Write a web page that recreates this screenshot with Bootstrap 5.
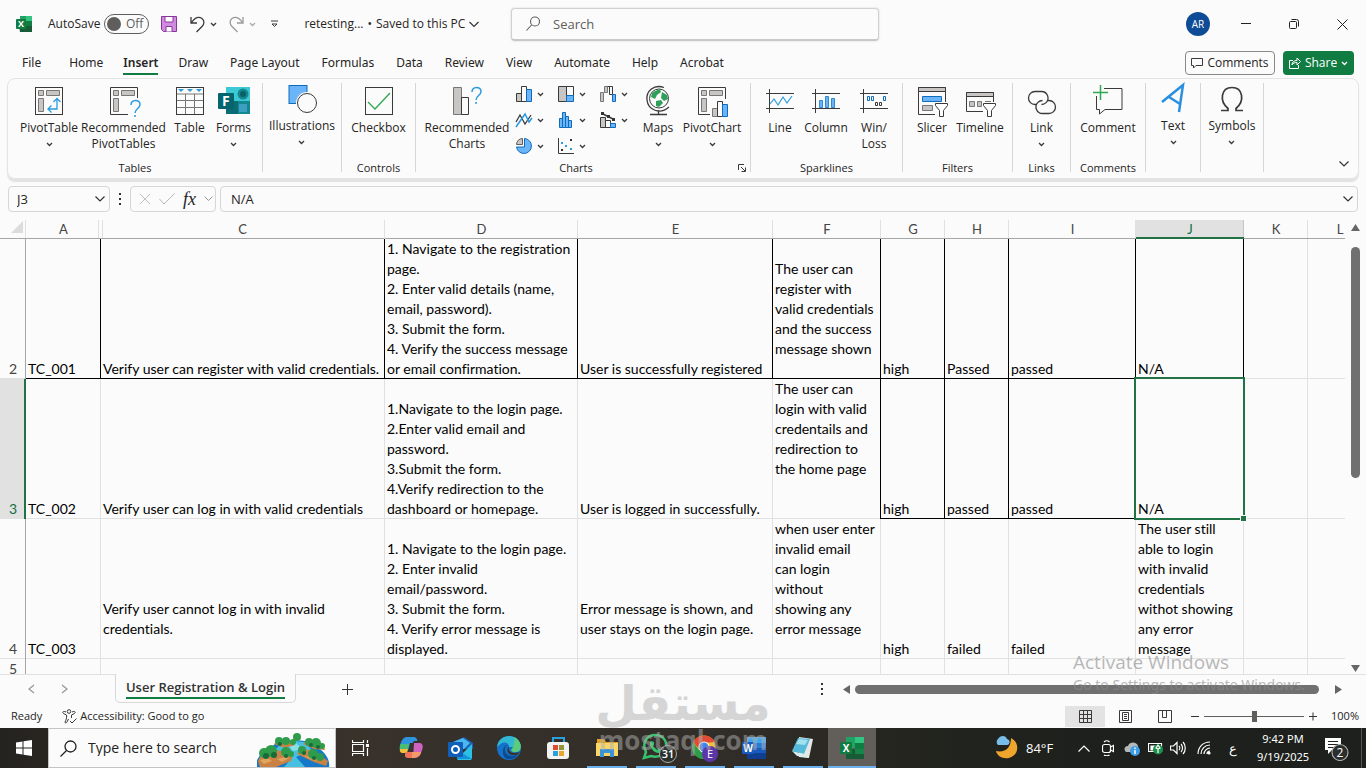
<!DOCTYPE html>
<html lang="en">
<head>
<meta charset="utf-8">
<meta name="viewport" content="width=device-width, initial-scale=1">
<title>retesting - Excel</title>
<link href="https://cdn.jsdelivr.net/npm/bootstrap@5.3.0/dist/css/bootstrap.min.css" rel="stylesheet">
<style>
  :root { --ink:#252423; --paper:#fbfbfb; --excel:#107c41; --line:#e1e1e1; }
  body { font-family:"Open Sans","Noto Sans",sans-serif; font-size:12px; line-height:16px; color:var(--ink); background:var(--paper); overflow-x:hidden; }
  button, input { font:inherit; color:inherit; }
  .plain-btn { border:0; background:none; padding:0; }
  svg { display:block; flex:none; }
  .ico { fill:none; stroke:#3b3a39; stroke-width:1; }
  .chev { width:7px; height:5px; fill:none; stroke:#3b3a39; stroke-width:1.3; }

  /* title bar */
  .title-bar { height:48px; }
  .title-left { flex:0 0 511px; padding-left:16px; }
  .auto-switch { width:45px; height:20px; border:1px solid #605e5c; border-radius:10px; padding:0 5px 0 2px; color:#605e5c; }
  .auto-switch input { appearance:none; width:14px; height:14px; border-radius:50%; background:#605e5c; margin:0; }
  .top-search { width:368px; height:33px; border:1px solid #d0d0d0; border-bottom:2px solid #c8c8c8; border-radius:4px; box-shadow:0 0 2px #ccc; padding:0 14px; }
  .bare-input { border:0; outline:0; background:transparent; padding:0; min-width:0; }
  .top-search input { font-size:13px; }
  .bare-input::placeholder { color:#605e5c; opacity:1; }
  .avatar-dot { width:24px; height:24px; border-radius:50%; background:#0f4c97; color:#fff; font-size:10px; margin-right:12px; }
  .win-btn { width:48px; height:48px; }

  /* menu tabs */
  .menu-row { height:30px; padding:0 12px 0 22px; }
  .menu-row a { color:var(--ink); text-decoration:none; line-height:20px; border-bottom:2px solid transparent; }
  .menu-row a.current { font-weight:600; border-color:var(--excel); }
  .menu-tabs { gap:20px; padding-top:5px; font-family:"Noto Sans",sans-serif; }
  .menu-tabs a:nth-child(n+5) { margin-left:2px; }
  .comment-btn { height:24px; width:90px; border:1px solid #8a8886; border-radius:4px; }
  .share-btn { height:24px; width:71px; border-radius:4px; background:var(--excel); color:#fff; }

  /* ribbon */
  .ribbon { margin:0 7px; height:101px; border:1px solid #e4e4e4; border-radius:8px; box-shadow:0 3px 1px #e2e2e2; }
  .tool-group { position:relative; height:89px; margin-top:4px; border-right:1px solid #d6d6d6; flex:none; }
  .tool-group .group-name { position:absolute; bottom:-4px; left:0; right:0; text-align:center; font-size:11px; }
  .tool { display:flex; flex-direction:column; align-items:center; flex:none; height:70px; padding-top:2px; }
  .tool svg.ico { width:32px; height:32px; margin-bottom:3px; overflow:visible; }
  .tool .chev { margin-top:6px; }
  .tool-high { padding-top:0; }
  .small-tools { display:grid; grid-template-columns:42px 42px 34px; grid-auto-rows:26px; margin:-2px 0 0 5px; }
  .small-tools .ico { width:18px; height:18px; }

  /* formula bar */
  .formula-row { height:26px; margin:7px 8px 0; }
  .fbox { border:1px solid #d6d6d6; border-radius:4px; height:26px; }
  .fbox input { font-size:13px; }
  .fx-btn { font:italic 18px "Liberation Serif",serif; }

  /* sheet */
  .sheet-area { height:454px; margin-top:8px; }
  .sheet-clip { overflow:hidden; flex:1 1 0; min-width:0; }
  .sheet { table-layout:fixed; width:1372px; border-collapse:separate; border-spacing:0; font-family:Lato,"Noto Sans",sans-serif; font-variant-ligatures:none; font-size:14px; line-height:20px; color:#000; }
  .sheet th, .sheet td { padding:0 2px; white-space:nowrap; position:relative; }
  .sheet td { --r:var(--line); --b:var(--line); height:140px; vertical-align:bottom; box-shadow:inset -1px 0 var(--r), inset 0 -1px var(--b); }
  .sheet td.rk { --r:#000; } .sheet td.bk { --b:#000; }
  .sheet thead th { height:19px; line-height:16px; vertical-align:top; font-weight:400; font-size:13px; text-align:center; color:#444; padding-top:1px; box-shadow:inset 0 -1px #a6a6a6, inset -1px 0 #e0e0e0; }
  .sheet thead th.gap-before { box-shadow:inset 0 -1px #a6a6a6; border-right:1px solid #e0e0e0; background:linear-gradient(#e0e0e0,#e0e0e0) 1px 0/1px 18px no-repeat; }
  .sheet thead th.gap-after { box-shadow:inset 0 -1px #a6a6a6; background:linear-gradient(#e0e0e0,#e0e0e0) 72px 0/1px 18px no-repeat; }
  .sheet thead th.picked { background:#e1e1e1; color:#0f7040; box-shadow:inset 0 -2px #217346, inset -1px 0 #c6c6c6; }
  .sheet tbody th { font-weight:400; text-align:center; vertical-align:bottom; color:#444; box-shadow:inset -1px 0 #a6a6a6, inset 0 -1px var(--line); }
  .sheet tbody th.picked { background:#e1e1e1; color:#0f7040; box-shadow:inset -2px 0 #217346; }
  .sheet .short-row td, .sheet .short-row th { height:20px; }
  .cell-cursor { position:absolute; inset:-2px -1px -1px -2px; border:2px solid #217346; z-index:2; }
  .cell-cursor::after { content:""; position:absolute; right:-4px; bottom:-4px; width:7px; height:7px; background:#217346; border:1px solid var(--paper); }
  .v-scroll { width:21px; padding:4px 6px 2px 0; }
  .v-thumb { width:9px; height:231px; border-radius:5px; background:#707070; margin-top:16px; }

  .tab-row { height:29px; border-top:1px solid var(--line); }
  .sheet-tab { margin-left:42px; width:181px; height:29px; margin-top:-1px; padding-top:3px; border:1px solid #d8d8d8; border-top:0; border-radius:0 0 5px 5px; background:var(--paper); }
  .sheet-tab a { font-weight:600; font-size:13px; line-height:20px; color:#333; text-decoration:none; border-bottom:2px solid var(--excel); }
  .h-scroll { width:548px; }
  .h-thumb { height:9px; border-radius:5px; background:#707070; margin:0 16px 0 5px; }
  .status-row { height:25px; font-size:11px; padding-top:1px; }
  .view-btn { width:40px; height:21px; }
  .zoom-range { appearance:none; width:100px; height:12px; background:linear-gradient(#605e5c,#605e5c) center/100% 1px no-repeat; }
  .zoom-range::-webkit-slider-thumb { appearance:none; width:5px; height:11px; background:#605e5c; }

  /* taskbar */
  .taskbar { height:40px; background:linear-gradient(90deg,#25231f 0,#38322b 26%,#302c27 55%,#24251f 66%,#1d201c 80%); color:#fff; }
  .task-search { width:288px; background:var(--paper); color:#222; border:1px solid #c4c4c4; padding-left:11px; position:relative; }
  .task-search input { font-size:14px; width:150px; }
  .task-search .bare-input::placeholder { color:#222; }
  .task-btn { width:48px; height:40px; margin-right:1px; position:relative; }
  .task-btn.running { background:linear-gradient(#6cb1ee,#6cb1ee) center bottom/40px 2px no-repeat; }
  .task-btn.front { background:linear-gradient(#6cb1ee,#6cb1ee) center bottom/48px 2px no-repeat #625e59; }
  .tray { padding-right:4px; }
  .tray svg { fill:none; stroke:#fff; stroke-width:1.2; }
  .clock { width:56px; line-height:18px; font-family:"Noto Sans",sans-serif; font-size:11px; margin-right:13px; }

  /* overlays */
  .activate { position:absolute; right:58px; bottom:72px; color:#8b8b8b; opacity:.6; pointer-events:none; z-index:5; width:235px; white-space:nowrap; }
  .activate .big-line { font-size:19px; line-height:24px; }
  .activate .low-line { font-family:"Noto Sans",sans-serif; font-size:14px; line-height:22px; }
  .seal { position:absolute; left:596px; bottom:6px; width:180px; opacity:.5; z-index:6; pointer-events:none; }
</style>
</head>
<body>
<div class="position-relative min-vh-100 d-flex flex-column">

<header class="title-bar d-flex align-items-center">
  <div class="title-left d-flex align-items-center">
    <svg width="16" height="16" viewBox="0 0 16 16"><path fill="#21a366" d="M4 0h12v8H4z"/><path fill="#33c481" d="M10 0h6v5h-6z"/><path fill="#107c41" d="M10 5h6v6h-6z"/><path fill="#185c37" d="M3 10h13v6H4z"/><rect y="3" width="10" height="10" rx="1" fill="#107c41"/><text x="2" y="11" font-size="9" font-weight="700" fill="#fff">X</text></svg>
    <label for="autosave" class="ms-3">AutoSave</label>
    <span class="auto-switch d-flex align-items-center justify-content-between ms-1"><input type="checkbox" id="autosave" aria-label="AutoSave"><span>Off</span></span>
    <button class="plain-btn" aria-label="Save" style="margin-left:12px"><svg width="16" height="16" viewBox="0 0 16 16"><path d="M.5.5h15v15h-13l-2-2z" fill="#d08cdc" stroke="#8a34a0"/><path d="M4 .5h8v5.500H4z" fill="#fff" stroke="#8a34a0"/><path d="M5 15.500v-5h6v5" fill="#fff" stroke="#8a34a0"/></svg></button>
    <button class="plain-btn d-flex align-items-center gap-1" aria-label="Undo" style="margin-left:13px"><svg width="16" height="17" viewBox="0 0 16 17" class="ico"><path stroke-width="1.300" d="M1 1v6h6M1.500 6.500C5 1.500 9 .5 12 2.500c3 2.500 2 6 0 8L6.500 16"/></svg><svg class="chev" viewBox="0 0 7 5"><path d="M1 1l2.500 2.500L6 1"/></svg></button>
    <button class="plain-btn d-flex align-items-center gap-1" aria-label="Redo" style="margin-left:12px"><svg width="16" height="17" viewBox="0 0 16 17" class="ico" style="stroke:#999"><path stroke-width="1.300" d="M14 1v6H8M13.500 6.500C10 1.500 6 .5 3 2.500c-3 2.500-2 6 0 8L8.500 16"/></svg><svg class="chev" viewBox="0 0 7 5" style="stroke:#aaa"><path d="M1 1l2.500 2.500L6 1"/></svg></button>
    <button class="plain-btn" aria-label="Customize toolbar" style="margin-left:14px"><svg width="9" height="8" viewBox="0 0 9 8" class="ico"><path d="M1 1h7M2 4h5L4.500 6.500z"/></svg></button>
    <span style="margin-left:25px">retesting...</span>
    <button class="plain-btn d-flex align-items-center gap-1 ms-1"><span>•</span><span>Saved to this PC</span><svg width="10" height="7" viewBox="0 0 10 7" fill="none" stroke="#333" stroke-width="1.200"><path d="M.5 1L5 5.500 9.500 1"/></svg></button>
  </div>
  <div class="top-search d-flex align-items-center">
    <svg width="14" height="15" viewBox="0 0 14 15" fill="none" stroke="#605e5c" stroke-width="1.100"><circle cx="9" cy="5.500" r="4.500"/><path d="M5.500 9L.5 14.500"/></svg>
    <input class="bare-input flex-grow-1" style="margin-left:13px" type="text" placeholder="Search" aria-label="Search">
  </div>
  <div class="ms-auto d-flex align-items-center">
    <button class="plain-btn avatar-dot text-center">AR</button>
    <button class="plain-btn win-btn" aria-label="Minimize"><svg class="mx-auto" width="10" height="10" viewBox="0 0 10 10" stroke="#222"><path d="M0 4.500h10"/></svg></button>
    <button class="plain-btn win-btn" aria-label="Restore"><svg class="mx-auto" width="10" height="10" viewBox="0 0 10 10" fill="none" stroke="#222"><rect x=".5" y="2.500" width="7" height="7" rx="1"/><path d="M2.500.5h5a2 2 0 0 1 2 2v5"/></svg></button>
    <button class="plain-btn win-btn" aria-label="Close"><svg class="mx-auto" width="11" height="11" viewBox="0 0 11 11" stroke="#222"><path d="M.5.5l10 10M10.500.5l-10 10"/></svg></button>
  </div>
</header>

<nav class="menu-row d-flex align-items-start">
  <div class="menu-tabs d-flex">
    <a href="#" class="me-2">File</a><a href="#">Home</a><a href="#" class="current">Insert</a><a href="#">Draw</a><a href="#">Page Layout</a><a href="#">Formulas</a><a href="#">Data</a><a href="#">Review</a><a href="#">View</a><a href="#">Automate</a><a href="#">Help</a><a href="#">Acrobat</a>
  </div>
  <div class="ms-auto d-flex gap-2" style="padding-top:3px">
    <button class="plain-btn comment-btn d-flex align-items-center justify-content-center gap-1"><svg class="ico" width="12" height="12" viewBox="0 0 12 12"><path d="M.5 1.500h11v7H5L2.500 11V8.500h-2z"/></svg>Comments</button>
    <button class="plain-btn share-btn d-flex align-items-center justify-content-center gap-1"><svg width="12" height="12" viewBox="0 0 12 12" fill="none" stroke="#fff"><path d="M4 3.500H.5v8h9V8M3 8c0-3 2-4.500 5-4.500V1l3.500 3.500L8 8V5.500C5.500 5.500 4 6 3 8z"/></svg>Share<svg class="chev" style="stroke:#fff" viewBox="0 0 7 5"><path d="M1 1l2.500 2.500L6 1"/></svg></button>
  </div>
</nav>

<section class="ribbon d-flex position-relative">
  <div class="tool-group d-flex" style="width:255px;padding-left:10px">
    <button class="plain-btn tool" style="width:62px"><svg class="ico" viewBox="0 0 32 32"><rect x="2.500" y="2.500" width="27" height="27"/><g fill="#c8c6c4" stroke="#797775"><path d="M5.500 5.500h5v5h-5zM13.500 5.500h13v5h-13zM5.500 13.500h5v13h-5z"/></g><path stroke="#2b9be0" stroke-width="1.300" d="M24 14v10H15M20.500 17L24 13.500l3.500 3.500M18.500 20.500L15 24l3.500 3.500"/></svg>PivotTable<svg class="chev" viewBox="0 0 7 5"><path d="M1 1l2.500 2.500L6 1"/></svg></button>
    <button class="plain-btn tool" style="width:87px"><svg class="ico" viewBox="0 0 32 32"><path d="M20 29.500H2.500v-27h27V13"/><g fill="#c8c6c4" stroke="#797775"><path d="M5.500 5.500h5v5h-5zM13.500 5.500h13v5h-13zM5.500 13.500h5v13h-5z"/></g><path stroke="#2b9be0" stroke-width="1.500" d="M23 20c0-6 9-6 9-.5 0 4-5 4-5 8.500M27 30v2"/></svg>Recommended<br>PivotTables</button>
    <button class="plain-btn tool" style="width:45px"><svg class="ico" viewBox="0 0 32 32"><path stroke="#797775" d="M11.500 9v20M20.500 9v20M3 15.500h26M3 22.500h26M3 9h26"/><rect x="2.500" y="2.500" width="27" height="27"/><path fill="#2b9be0" stroke="none" d="M4 4h6L7 7zM13 4h6l-3 3zM22 4h6l-3 3z"/></svg>Table</button>
    <button class="plain-btn tool" style="width:43px"><svg class="ico" viewBox="0 0 32 32" style="stroke:none"><path fill="#3cc8d4" d="M8 2h24v14H8z"/><path fill="#0c6c74" d="M8 16h12v13H8z"/><path fill="#148890" d="M20 16h12v13H20z"/><circle cx="25" cy="9" r="5.500" fill="#148890"/><circle cx="25" cy="9" r="3" fill="#0c6068"/><path fill="#3c9ec0" d="M21 19h8v8h-8z"/><rect y="8" width="16" height="16" rx="1" fill="#04656e"/><text x="4" y="21" font-size="14" font-weight="700" fill="#fff">F</text></svg>Forms<svg class="chev" viewBox="0 0 7 5"><path d="M1 1l2.500 2.500L6 1"/></svg></button>
    <span class="group-name">Tables</span>
  </div>
  <div class="tool-group" style="width:79px">
    <button class="plain-btn tool tool-high mx-auto"><svg class="ico" viewBox="0 0 32 32"><rect x="3" y="2.500" width="18" height="18" fill="#6cb4f8" stroke="#0f6cbd"/><circle cx="21" cy="20" r="11" fill="#fbfbfb" stroke="none"/><circle cx="21" cy="20" r="9.500" fill="#fbfbfb"/></svg>Illustrations<svg class="chev" viewBox="0 0 7 5"><path d="M1 1l2.500 2.500L6 1"/></svg></button>
  </div>
  <div class="tool-group" style="width:74px">
    <button class="plain-btn tool mx-auto"><svg class="ico" viewBox="0 0 32 32"><rect x="2.500" y="2.500" width="27" height="27"/><path stroke="#2fa84f" stroke-width="1.300" d="M5 17l7 7L27 8"/></svg>Checkbox</button>
    <span class="group-name">Controls</span>
  </div>
  <div class="tool-group d-flex" style="width:335px;padding-left:8px">
    <button class="plain-btn tool" style="width:86px"><svg class="ico" viewBox="0 0 32 32"><path fill="#c8c6c4" stroke="#797775" d="M2.500 2.500h8v27h-8z"/><path d="M10.500 12.500h7v17h-7z"/><path stroke="#2b9be0" stroke-width="1.500" d="M21 7c0-6 9-6 9-.5 0 4-5 4-5 8.500M25 17v2"/></svg>Recommended<br>Charts</button>
    <div class="small-tools">
      <button class="plain-btn d-flex align-items-center gap-1" aria-label="Column chart"><svg class="ico" viewBox="0 0 18 18"><path fill="#c8c6c4" d="M1.500 8.500h5v8h-5z"/><path d="M6.500 1.500h5v15h-5z"/><path fill="#6cb4f8" stroke="#0f6cbd" d="M11.500 4.500h5v12h-5z"/></svg><svg class="chev" viewBox="0 0 7 5"><path d="M1 1l2.500 2.500L6 1"/></svg></button>
      <button class="plain-btn d-flex align-items-center gap-1" aria-label="Hierarchy chart"><svg class="ico" viewBox="0 0 18 18"><path fill="#c8c6c4" d="M1.500 1.500h8v15h-8z"/><path d="M9.500 1.500h7v9h-7z"/><path fill="#6cb4f8" stroke="#0f6cbd" d="M9.500 10.500h7v6h-7z"/></svg><svg class="chev" viewBox="0 0 7 5"><path d="M1 1l2.500 2.500L6 1"/></svg></button>
      <button class="plain-btn d-flex align-items-center gap-1" aria-label="Waterfall chart"><svg class="ico" viewBox="0 0 18 18"><path fill="#c8c6c4" stroke="#797775" d="M1.500 7.500h3v9h-3zM5.500 1.500h3v6h-3z"/><path d="M8.500 1.500h5v8h-3v-8"/><path fill="#6cb4f8" stroke="#0f6cbd" d="M13.500 9.500h3v7h-3z"/></svg><svg class="chev" viewBox="0 0 7 5"><path d="M1 1l2.500 2.500L6 1"/></svg></button>
      <button class="plain-btn d-flex align-items-center gap-1" aria-label="Line chart"><svg class="ico" viewBox="0 0 18 18"><path stroke-width="1.300" d="M1 11l4-7 5 9 6-9"/><path stroke="#2b9be0" stroke-width="1.600" d="M1 16l9-13 4 8 3-4"/></svg><svg class="chev" viewBox="0 0 7 5"><path d="M1 1l2.500 2.500L6 1"/></svg></button>
      <button class="plain-btn d-flex align-items-center gap-1" aria-label="Statistic chart"><svg class="ico" viewBox="0 0 18 18"><path fill="#6cb4f8" stroke="#0f6cbd" d="M2.500 7.500h3v9h-3zM5.500 1.500h3v15h-3zM8.500 5.500h3v11h-3zM11.500 9.500h3v7h-3z"/></svg><svg class="chev" viewBox="0 0 7 5"><path d="M1 1l2.500 2.500L6 1"/></svg></button>
      <button class="plain-btn d-flex align-items-center gap-1" aria-label="Combo chart"><svg class="ico" viewBox="0 0 18 18"><path fill="#c8c6c4" d="M1.500 6.500h5v10h-5z"/><path d="M6.500 9.500h5v7h-5z"/><path fill="#6cb4f8" stroke="#0f6cbd" d="M11.500 12.500h5v4h-5z"/><path stroke-width="1.500" d="M3 2.500l6 3 6 3"/><path fill="#333" stroke="none" d="M2 1h3v3H2zM8 4h3v3H8zM13 7h3v3h-3z"/></svg><svg class="chev" viewBox="0 0 7 5"><path d="M1 1l2.500 2.500L6 1"/></svg></button>
      <button class="plain-btn d-flex align-items-center gap-1" aria-label="Pie chart"><svg class="ico" viewBox="0 0 18 18"><path fill="#6cb4f8" stroke="#0f6cbd" d="M9.500 1.500A7.500 7.500 0 1 1 1.500 10H9.500z"/><path fill="#c8c6c4" stroke="#605e5c" d="M7.500 1.500a6 6 0 0 0-6 6h6z"/></svg><svg class="chev" viewBox="0 0 7 5"><path d="M1 1l2.500 2.500L6 1"/></svg></button>
      <button class="plain-btn d-flex align-items-center gap-1" aria-label="Scatter chart"><svg class="ico" viewBox="0 0 18 18"><path d="M1.500 1v15.500H17"/><path fill="#333" stroke="none" d="M4 12h2v2H4zM13 2h2v2h-2z"/><path fill="#2b9be0" stroke="none" d="M4 5h2v2H4zM8 8h2v2H8zM13 11h2v2h-2z"/></svg><svg class="chev" viewBox="0 0 7 5"><path d="M1 1l2.500 2.500L6 1"/></svg></button>
    </div>
    <button class="plain-btn tool" style="width:50px"><svg class="ico" viewBox="0 0 32 32"><circle cx="17" cy="13.500" r="9.500"/><path d="M22 2.500C12-1 4 6 5 15c1 10 13 15 22 7M16.500 25v4M8 29.500h17" stroke-width="1.300"/><path fill="#2fa05a" stroke="none" d="M13 6l5-2 1 3-4 3-2 4-4-2 1-4zM20 7l5 3 1 4-4 2-3-3zM14 16l5-1 2 3-4 4-3-1z"/></svg>Maps<svg class="chev" viewBox="0 0 7 5"><path d="M1 1l2.500 2.500L6 1"/></svg></button>
    <button class="plain-btn tool" style="width:58px"><svg class="ico" viewBox="0 0 32 32"><path d="M14 29.500H2.500v-27h27V14"/><g fill="#c8c6c4" stroke="#797775"><path d="M5.500 5.500h5v5h-5zM13.500 5.500h13v5h-13zM5.500 13.500h5v13h-5z"/></g><path fill="#c8c6c4" stroke="#797775" d="M16.500 23.500h5v8h-5z"/><path fill="#fff" d="M21.500 16.500h5v15h-5z"/><path fill="#6cb4f8" stroke="#0f6cbd" d="M26.500 19.500h5v12h-5z"/></svg>PivotChart<svg class="chev" viewBox="0 0 7 5"><path d="M1 1l2.500 2.500L6 1"/></svg></button>
    <span class="group-name" style="right:14px">Charts</span>
    <button class="plain-btn position-absolute bottom-0 end-0 me-1" aria-label="Charts settings"><svg class="ico" width="8" height="8" viewBox="0 0 8 8"><path d="M.5 6V.5H6M3 3l4 4M7.500 3.500v4h-4"/></svg></button>
  </div>
  <div class="tool-group d-flex" style="width:152px;padding-left:9px">
    <button class="plain-btn tool" style="width:40px"><svg class="ico" viewBox="0 0 32 32"><path d="M2 8.500h28M2 23.500h28M5.500 4v24"/><path stroke="#2b9be0" stroke-width="1.200" d="M6 19l4-5 4 6 5-8 4 6 5-7"/></svg>Line</button>
    <button class="plain-btn tool" style="width:52px"><svg class="ico" viewBox="0 0 32 32"><path d="M2 8.500h28M2 23.500h28M5.500 4v24"/><path fill="#6cb4f8" stroke="#2b8ad0" d="M9.500 15.500h3v7h-3zM15.500 11.500h3v11h-3zM21.500 13.500h3v9h-3z"/></svg>Column</button>
    <button class="plain-btn tool" style="width:44px"><svg class="ico" viewBox="0 0 32 32"><path d="M2 8.500h28M2 23.500h28M5.500 4v24"/><path stroke="#0f6cbd" d="M9.500 11.500h2v4h-2zM13.500 11.500h2v4h-2zM25.500 11.500h2v4h-2z"/><path d="M17.500 17.500h2v3h-2zM21.500 17.500h2v3h-2z"/></svg>Win/<br>Loss</button>
    <span class="group-name">Sparklines</span>
  </div>
  <div class="tool-group d-flex" style="width:110px;padding-left:6px">
    <button class="plain-btn tool" style="width:46px"><svg class="ico" viewBox="0 0 32 32"><path d="M19 29.500H2.500v-27h27V17"/><path fill="#c8c6c4" d="M2.500 2.500h27v4h-27z"/><path fill="#6cb4f8" stroke="#0f6cbd" d="M6.500 11.500h19v5h-19z"/><path fill="#c8c6c4" stroke="#797775" d="M6.500 20.500h10v5h-10z"/><path fill="#fff" d="M19.500 18.500h12v2l-4 5v6h-4v-6l-4-5z"/></svg>Slicer</button>
    <button class="plain-btn tool" style="width:50px"><svg class="ico" viewBox="0 0 32 32"><path d="M19 26.500H2.500v-19h27V17"/><path fill="#c8c6c4" d="M2.500 7.500h27v4h-27z"/><path fill="#c8c6c4" stroke="#797775" d="M5.500 16.500h5v5h-5zM13.500 16.500h4v5h-4zM21 16.500h6"/><path fill="#fff" d="M19.500 18.500h12v2l-4 5v6h-4v-6l-4-5z"/></svg>Timeline</button>
    <span class="group-name">Filters</span>
  </div>
  <div class="tool-group" style="width:58px">
    <button class="plain-btn tool mx-auto"><svg class="ico" viewBox="0 0 32 32"><g stroke-width="1.300"><path d="M10.500 19.500H9a6.500 6.500 0 0 1 0-13h6.500a6.500 6.500 0 0 1 4.600 11.100a6.500 6.500 0 0 1-4.600 1.900"/><path d="M21.500 15.500H23a6.500 6.500 0 0 1 0 13h-6.500a6.500 6.500 0 0 1-4.600-11.100a6.500 6.500 0 0 1 4.600-1.900"/></g></svg>Link<svg class="chev" viewBox="0 0 7 5"><path d="M1 1l2.500 2.500L6 1"/></svg></button>
    <span class="group-name">Links</span>
  </div>
  <div class="tool-group" style="width:75px">
    <button class="plain-btn tool mx-auto"><svg class="ico" viewBox="0 0 32 32"><path d="M12 3.500h18v21H13L7.500 29v-4.500H4.500V11"/><path stroke="#2fa84f" stroke-width="1.500" d="M8.500 0v15M1 7.500h15"/></svg>Comment</button>
    <span class="group-name">Comments</span>
  </div>
  <div class="tool-group" style="width:55px">
    <button class="plain-btn tool tool-high mx-auto"><svg class="ico" viewBox="0 0 32 32"><path stroke="#2b8fe0" stroke-width="2.500" d="M5 19L26 2l-4 27M12 14l11 7"/></svg>Text<svg class="chev" viewBox="0 0 7 5"><path d="M1 1l2.500 2.500L6 1"/></svg></button>
  </div>
  <div class="tool-group" style="width:63px">
    <button class="plain-btn tool tool-high mx-auto"><svg class="ico" viewBox="0 0 32 32"><path stroke-width="1.700" d="M5 27.500h7v-2C3 18 5 4.500 16 4.500S29 18 20 25.500v2h7"/></svg>Symbols<svg class="chev" viewBox="0 0 7 5"><path d="M1 1l2.500 2.500L6 1"/></svg></button>
  </div>
  <button class="plain-btn position-absolute bottom-0 end-0" aria-label="Collapse ribbon" style="margin:0 9px 11px 0"><svg width="10" height="6" viewBox="0 0 10 6" fill="none" stroke="#333" stroke-width="1.200"><path d="M.5.5L5 5 9.500.5"/></svg></button>
</section>

<section class="formula-row d-flex align-items-center">
  <div class="fbox d-flex align-items-center px-1" style="width:102px"><input class="bare-input flex-grow-1 ps-1" type="text" value="J3" aria-label="Name box"><svg width="10" height="6" viewBox="0 0 10 6" fill="none" stroke="#333" stroke-width="1.200"><path d="M.5.5L5 5 9.500.5"/></svg></div>
  <svg style="margin:0 9px" width="2" height="12" viewBox="0 0 2 12" fill="#333"><path d="M0 0h2v2H0zM0 5h2v2H0zM0 10h2v2H0z"/></svg>
  <div class="fbox d-flex align-items-center justify-content-between ps-1" style="width:86px;padding-right:2px">
    <button class="plain-btn ms-1" aria-label="Cancel"><svg width="12" height="12" viewBox="0 0 14 14" stroke="#b8b6b4"><path d="M1 1l12 12M13 1L1 13"/></svg></button>
    <button class="plain-btn" aria-label="Enter"><svg width="16" height="12" viewBox="0 0 16 12" fill="none" stroke="#b8b6b4"><path d="M.5 6L5 11 15.500.5"/></svg></button>
    <button class="plain-btn fx-btn" aria-label="Insert function">fx</button>
    <svg width="9" height="6" viewBox="0 0 9 6" fill="none" stroke="#999"><path d="M.5.5l4 4 4-4"/></svg>
  </div>
  <div class="fbox d-flex align-items-center flex-grow-1 ms-1 px-1"><input class="bare-input flex-grow-1" type="text" value="N/A" aria-label="Formula" style="padding-left:6px"><svg width="10" height="6" viewBox="0 0 10 6" fill="none" stroke="#333" stroke-width="1.200"><path d="M.5.5L5 5 9.500.5"/></svg></div>
</section>

<main class="sheet-area d-flex">
  <div class="sheet-clip">
    <table class="sheet">
      <colgroup><col style="width:26px"><col style="width:75px"><col style="width:284px"><col style="width:193px"><col style="width:195px"><col style="width:108px"><col style="width:64px"><col style="width:64px"><col style="width:127px"><col style="width:108px"><col style="width:64px"><col style="width:64px"></colgroup>
      <thead><tr><th><svg class="ms-auto" width="13" height="13" viewBox="0 0 13 13"><path fill="#dcdcdc" d="M12 0v12H0z"/></svg></th><th class="gap-after">A</th><th class="gap-before">C</th><th>D</th><th>E</th><th>F</th><th>G</th><th>H</th><th>I</th><th class="picked">J</th><th>K</th><th>L</th></tr></thead>
      <tbody>
        <tr><th>2</th><td class="rk bk">TC_001</td><td class="rk bk">Verify user can register with valid credentials.</td><td class="rk bk">1. Navigate to the registration<br>page.<br>2. Enter valid details (name,<br>email, password).<br>3. Submit the form.<br>4. Verify the success message<br>or email confirmation.</td><td class="rk bk">User is successfully registered</td><td class="rk bk align-middle">The user can<br>register with<br>valid credentials<br>and the success<br>message shown</td><td class="rk bk">high</td><td class="rk bk">Passed</td><td class="rk bk">passed</td><td class="rk bk">N/A</td><td></td><td></td></tr>
        <tr><th class="picked">3</th><td>TC_002</td><td>Verify user can log in with valid credentials</td><td>1.Navigate to the login page.<br>2.Enter valid email and<br>password.<br>3.Submit the form.<br>4.Verify redirection to the<br>dashboard or homepage.</td><td>User is logged in successfully.</td><td class="rk align-top">The user can<br>login with valid<br>credentails and<br>redirection to<br>the home page</td><td class="rk bk">high</td><td class="rk bk">passed</td><td class="rk bk">passed</td><td>N/A<span class="cell-cursor"></span></td><td></td><td></td></tr>
        <tr><th>4</th><td>TC_003</td><td>Verify user cannot log in with invalid<br>credentials.<br>&nbsp;</td><td>1. Navigate to the login page.<br>2. Enter invalid<br>email/password.<br>3. Submit the form.<br>4. Verify error message is<br>displayed.</td><td>Error message is shown, and<br>user stays on the login page.<br>&nbsp;</td><td class="align-top">when user enter<br>invalid email<br>can login<br>without<br>showing any<br>error message</td><td>high</td><td>failed</td><td>failed</td><td>The user still<br>able to login<br>with invalid<br>credentials<br>withot showing<br>any error<br>message</td><td></td><td></td></tr>
        <tr class="short-row"><th>5</th><td></td><td></td><td></td><td></td><td></td><td></td><td></td><td></td><td></td><td></td><td></td></tr>
      </tbody>
    </table>
  </div>
  <div class="v-scroll d-flex flex-column align-items-end">
    <svg width="9" height="7" viewBox="0 0 9 7" fill="#666"><path d="M4.500 0L9 7H0z"/></svg>
    <div class="v-thumb"></div>
    <svg class="mt-auto" width="9" height="7" viewBox="0 0 9 7" fill="#666"><path d="M4.500 7L9 0H0z"/></svg>
  </div>
</main>

<section class="tab-row d-flex align-items-center">
  <svg style="margin-left:28px" width="7" height="10" viewBox="0 0 7 10" fill="none" stroke="#999" stroke-width="1.300"><path d="M6 1L1 5l5 4"/></svg>
  <svg style="margin-left:26px;margin-right:5px" width="7" height="10" viewBox="0 0 7 10" fill="none" stroke="#999" stroke-width="1.300"><path d="M1 1l5 4-5 4"/></svg>
  <div class="sheet-tab text-center text-nowrap"><a href="#" class="d-inline-block">User Registration &amp; Login</a></div>
  <button class="plain-btn" aria-label="New sheet" style="margin-left:46px"><svg width="11" height="11" viewBox="0 0 11 11" stroke="#333"><path d="M0 5.500h11M5.500 0v11"/></svg></button>
  <div class="h-scroll ms-auto d-flex align-items-center">
    <svg width="8" height="12" style="margin-right:17px" viewBox="0 0 8 12" fill="#333"><path d="M3 0h2v2H3zM3 5h2v2H3zM3 10h2v2H3z"/></svg>
    <svg width="7" height="9" viewBox="0 0 7 9" fill="#666"><path d="M0 4.500L7 0v9z"/></svg>
    <div class="h-thumb flex-grow-1"></div>
    <svg class="me-4" width="7" height="9" viewBox="0 0 7 9" fill="#666"><path d="M7 4.500L0 0v9z"/></svg>
  </div>
</section>

<footer class="status-row d-flex align-items-center">
  <span style="margin-left:11px">Ready</span>
  <svg class="ico" style="margin:0 3px 0 20px" width="15" height="15" viewBox="0 0 15 15"><circle cx="7" cy="2.500" r="1.800"/><path d="M4 3C1 1.500 0 3.500 1.500 4.500L4.500 6c.5 3-.5 5-1.500 7 0 1.500 1.500 1 2 0l1.500-3M10 3c3-1.500 4 .5 2.500 1.500L9.500 6v3M8 12l2 2 4.500-4.500"/></svg>
  <span>Accessibility: Good to go</span>
  <div class="ms-auto d-flex align-items-center">
    <button class="plain-btn view-btn" aria-label="Normal" style="background:#e3e3e3"><svg class="ico mx-auto" width="13" height="13" viewBox="0 0 13 13"><path d="M.5.5h12v12H.5zM4.500.5v12M8.500.5v12M.5 4.500h12M.5 8.500h12"/></svg></button>
    <button class="plain-btn view-btn" aria-label="Page layout"><svg class="ico mx-auto" width="13" height="13" viewBox="0 0 13 13"><path d="M.5.5h12v12H.5zM3.500 2.500h6v8h-6zM5 4.500h3M5 6.500h3M5 8.500h3"/></svg></button>
    <button class="plain-btn view-btn" aria-label="Page break"><svg class="ico mx-auto" width="14" height="13" viewBox="0 0 14 13"><path d="M.5.5h13v12H.5zM4.500.5v7h4v-7"/></svg></button>
    <svg style="margin:0 5px 0 6px" width="8" height="9" viewBox="0 0 8 9" stroke="#333"><path d="M0 4.500h8"/></svg>
    <input class="zoom-range m-0" type="range" min="0" max="100" value="50" aria-label="Zoom">
    <svg style="margin:0 14px 0 5px" width="8" height="9" viewBox="0 0 8 9" stroke="#333"><path d="M0 4.500h8M4 .5v8"/></svg>
    <span style="margin-right:7px">100%</span>
  </div>
</footer>

<section class="taskbar d-flex">
  <button class="plain-btn d-flex align-items-center justify-content-center" aria-label="Start" style="width:48px"><svg width="16" height="16" viewBox="0 0 16 16" fill="#fff"><path d="M0 2.500l6.500-1v6H0zM7.500 1.300L16 0v7.500H7.500zM0 8.500h6.500v6l-6.500-1zM7.500 8.500H16V16l-8.500-1.300z"/></svg></button>
  <div class="task-search d-flex align-items-center">
    <svg width="17" height="17" viewBox="0 0 17 17" fill="none" stroke="#222" stroke-width="1.300"><circle cx="10.500" cy="6.500" r="5.500"/><path d="M6.500 10.500L.5 16.500"/></svg>
    <input class="bare-input" style="margin-left:11px" type="text" placeholder="Type here to search" aria-label="Type here to search">
    <svg class="position-absolute bottom-0 end-0 me-1" width="74" height="34" viewBox="0 0 74 34">
      <path fill="#1678c8" d="M0 34c-1-5 0-8 2-10 2-6 6-8 12-9 3-5 10-7 22-8 14 0 24 4 28 10 6 5 9 11 8 17z"/><path fill="#46bfe0" d="M15 19l14-12 18 2 8 8-16 7 9 10H27l8-9z"/><path fill="#8adfe6" d="M31 12l8-2 6 6-9 2z"/>
      <path fill="#c98243" d="M1 28l4-8 15-3 16 4-2 7-15 6H3zM17 11l6-5 13 3 2 3-10 3zM46 11l4-4 16 4 2 6-11-1zM40 21l4-6 15 4 12 9-2 5-12-4z"/>
      <path fill="#e2a55f" d="M3 27l8-2 4 3-8 3zM20 26l8-2 4 1-7 4zM47 23l8 1 4 4-6-2z"/>
      <g fill="#2f9c4b"><circle cx="7" cy="20" r="5"/><circle cx="14" cy="18" r="6"/><circle cx="29" cy="19" r="5"/><circle cx="34" cy="21" r="3"/><circle cx="22" cy="8" r="4"/><circle cx="29" cy="8" r="4"/><circle cx="36" cy="9" r="3"/><circle cx="40" cy="4" r="4"/><circle cx="52" cy="9" r="4"/><circle cx="59" cy="10" r="5"/><circle cx="65" cy="13" r="3"/><circle cx="45" cy="17" r="4"/><circle cx="56" cy="21" r="5"/><circle cx="63" cy="24" r="4"/></g>
      <g fill="#176b3a"><circle cx="9" cy="23" r="3"/><circle cx="17" cy="22" r="3"/><circle cx="29" cy="23" r="2"/><circle cx="23" cy="11" r="2"/><circle cx="54" cy="12" r="2"/><circle cx="61" cy="14" r="2"/><circle cx="57" cy="25" r="2"/><circle cx="47" cy="20" r="2"/></g>
    </svg>
  </div>
  <button class="plain-btn task-btn d-flex align-items-center justify-content-center" aria-label="Task view" style="margin-right:3px"><svg width="17" height="16" viewBox="0 0 17 16" fill="none" stroke="#fff" stroke-width="1.200"><path d="M.5 0v2.500h11V0M.5 16v-2.500h11V16M.5 4.500h11v7H.5zM15.500 0v3M15.500 8v8"/><path fill="#fff" d="M14.500 4.500h2v2h-2z"/></svg></button>
  <button class="plain-btn task-btn d-flex align-items-center justify-content-center" aria-label="Copilot"><svg width="24" height="22" viewBox="0 0 24 22"><path fill="#2f93dd" d="M8 0h7c2 0 3 2 3.500 4H15L9 13H1C0 8 3 0 8 0z"/><path fill="#4bbd72" d="M1.500 7h8.500l-2 7H3c-3 0-2.500-4-1.500-7z"/><path fill="#f4be3d" d="M1 12h8l-1 4H4c-3 0-3.500-2-3-4z"/><path fill="#f0745a" d="M7 15h8l-2 6H9c-3 0-4-3-2-6z"/><path fill="#cf63c1" d="M15 6h6c4 1 3 5 1 10-1 4-4 5-8 5z"/><path fill="#f49a68" d="M13 15h9c-1 4-4 6-9 6z"/><path fill="#38332c" d="M11 6h4l-3 9H9z"/></svg></button>
  <button class="plain-btn task-btn d-flex align-items-center justify-content-center" aria-label="Outlook"><svg width="25" height="23" viewBox="0 0 25 23"><path fill="#1d5fb4" d="M3 6l13-6 9 6v6H3z"/><path fill="#49b8ef" d="M5 5l10-4 7 5-6 6H5z"/><path fill="#2cc0e4" d="M9 22L24 7v14l-1 2H10z"/><path fill="#1593d8" d="M9 13l15 9H9z"/><rect y="5" width="15" height="15" rx="1" fill="#0f5fb8"/><circle cx="7.500" cy="12.500" r="3.500" fill="none" stroke="#fff" stroke-width="2"/></svg></button>
  <button class="plain-btn task-btn d-flex align-items-center justify-content-center" aria-label="Edge"><svg width="24" height="24" viewBox="0 0 24 24"><circle cx="12" cy="12" r="12" fill="#1572c9"/><path fill="#31b6d4" d="M0 11C2-4 23-3 24 11H12C11 4 4 6 0 11z"/><path fill="#5bcc7c" d="M17 1c6 3 8 9 6 13-2 3-8 3-9 0 3-3 4-9 3-13z"/><path fill="#0c4a94" d="M8 13c0 8 8 8 13 6-5 6-16 6-15-4 0-4 3-6 6-6-3 1-4 2-4 4z"/><path fill="#38332c" d="M12 10c-1 3 0 7 5 7 3 0 5-1 6-1l-3 3c-9 2-12-5-8-9z"/></svg></button>
  <button class="plain-btn task-btn d-flex align-items-center justify-content-center" aria-label="Store"><svg width="24" height="24" viewBox="0 0 24 24"><path fill="none" stroke="#2ca0dc" stroke-width="2" d="M7 7V2h11v5"/><rect x="1" y="6" width="22" height="17" rx="3" fill="#f2f2f2"/><path fill="#e04b2d" d="M7 9h5v5H7z"/><path fill="#94943b" d="M13 9h5v5h-5z"/><path fill="#23a2dc" d="M7 15h5v5H7z"/><path fill="#e7a52d" d="M13 15h5v5h-5z"/></svg></button>
  <button class="plain-btn task-btn running d-flex align-items-center justify-content-center" aria-label="File Explorer"><svg width="22" height="19" viewBox="0 0 22 19"><path fill="#e6a11f" d="M1 0h7l2 3h12v5H1z"/><path fill="#fbd768" d="M0 4h22v13H0z"/><path fill="#3d93d8" d="M4 10h14v8h-4v-4H8v4H4z"/></svg></button>
  <button class="plain-btn task-btn running d-flex align-items-center justify-content-center" aria-label="WhatsApp"><svg width="34" height="30" viewBox="0 0 34 30" overflow="visible"><path fill="none" stroke="#35c26c" stroke-width="2.500" d="M5 25l2-6C2 9 9 2 16 2c8 0 12 6 11 12-1 8-8 11-15 9z"/><path fill="#35c26c" d="M12 8l3 1v3l-1 1 4 4 2-2 3 3-2 2c-6 1-11-6-10-11z"/><circle cx="29" cy="21" r="8.500" fill="#2c302c" stroke="#aaa"/><text x="29" y="25" text-anchor="middle" font-size="11" font-weight="600" fill="#fff">31</text></svg></button>
  <button class="plain-btn task-btn running d-flex align-items-center justify-content-center" aria-label="Chrome"><svg width="26" height="27" viewBox="0 0 26 27"><circle cx="12" cy="12" r="11.500" fill="#f5c12e"/><path fill="#e14a35" d="M1 7C5-1 18-2 23 7L12 8l-3 8z"/><path fill="#2c9c4d" d="M1 7c-4 9 3 17 11 17l4-8-9-1z"/><circle cx="12" cy="12" r="5.500" fill="#fff"/><circle cx="12" cy="12" r="4.500" fill="#3d83ea"/><circle cx="18" cy="19" r="8" fill="#5c35a6"/><text x="18" y="23" text-anchor="middle" font-size="11" fill="#fff">E</text></svg></button>
  <button class="plain-btn task-btn running d-flex align-items-center justify-content-center" aria-label="Word"><svg width="24" height="22" viewBox="0 0 24 22"><path fill="#41a5ee" d="M5 0h19v6H5z"/><path fill="#2b7cd3" d="M5 6h19v5H5z"/><path fill="#185abd" d="M5 11h19v6H5z"/><path fill="#103f91" d="M5 16h19v6H5z"/><rect y="5" width="12" height="12" rx="1" fill="#185abd"/><text x="6" y="15" text-anchor="middle" font-size="10" font-weight="700" fill="#fff">W</text></svg></button>
  <button class="plain-btn task-btn running d-flex align-items-center justify-content-center" aria-label="Notepad"><svg width="24" height="22" viewBox="0 0 24 22"><path fill="#e6e6e6" d="M8 0l14 2-4 19-10-1z"/><path fill="#55b9d9" d="M7 1l12 1-6 15-12-3z"/><path fill="#a2e1ee" d="M8 2l9 1-3 5-9-1z"/><path fill="#d8ecec" d="M1 14l12 3 5 4-12-2z"/></svg></button>
  <button class="plain-btn task-btn front d-flex align-items-center justify-content-center" aria-label="Excel"><svg width="24" height="22" viewBox="0 0 24 22"><path fill="#21a366" d="M6 0h18v11H6z"/><path fill="#33c481" d="M15 0h9v6h-9z"/><path fill="#107c41" d="M15 6h9v6h-9z"/><path fill="#185c37" d="M6 12h18v10H6z"/><path fill="#17864b" d="M15 12h9v5h-9z"/><rect y="5" width="12" height="12" rx="1" fill="#107c41"/><text x="6" y="15" text-anchor="middle" font-size="10" font-weight="700" fill="#fff">X</text></svg></button>
  <div class="tray ms-auto d-flex align-items-center">
    <svg width="24" height="24" viewBox="0 0 24 24" style="stroke:none"><path fill="#eea52c" d="M17 2c8 4 8 14 2 18-7 5-16 1-17-5 9 2 15-3 15-13z"/><path fill="#79bdea" d="M4 9a4 4 0 0 1 0-6c2-4 8-4 9 0 4 1 3 6 0 6z"/></svg>
    <span class="ms-2" style="font-size:13px;width:52px">84°F</span>
    <svg width="12" height="7" viewBox="0 0 12 7"><path d="M.5 6.500L6 1l5.500 5.500"/></svg>
    <svg style="margin-left:12px" width="12" height="16" viewBox="0 0 12 16"><rect x=".5" y="4.500" width="8" height="8" rx="2"/><path d="M8.500 7l3-1.500v6l-3-1.500M2 2c1.500-1.500 4-1.500 5.500 0M2 15c1.500 1 4 1 5.500 0"/></svg>
    <svg style="margin-left:10px;stroke:none" width="16" height="15" viewBox="0 0 16 15"><path fill="#b4b8b8" d="M2 11C-1 8 1 5 4 5c2-5 9-4 10 0l1 6z"/><circle cx="11" cy="10" r="5" fill="#3c9ee6"/><path stroke="#fff" stroke-width="1.500" d="M11 9v4M11 6.500V8"/></svg>
    <svg class="ms-2" width="16" height="14" viewBox="0 0 16 14"><path d="M.5 2.500h13v8H.5z"/><path fill="#fff" d="M3 5h6v4H3z"/><circle cx="10" cy="8.500" r="5" fill="#1c8f4b" stroke="none"/><path d="M10 12V8l-2-1 2-3 2 3-2 1"/></svg>
    <svg style="margin-left:6px" width="16" height="14" viewBox="0 0 16 14"><path d="M.5 5h3L7 1.500v11L3.500 9h-3zM9 5c1 1 1 3 0 4M11 3c2 2 2 6 0 8M13 1c3 3 3 9 0 12"/></svg>
    <svg style="margin-left:11px" width="14" height="14" viewBox="0 0 14 14"><path d="M1 13C1 6 6 1 13 1M4 13c0-5 4-9 9-9M7 13c0-3 3-6 6-6M10 13c0-2 1-3 3-3"/><circle cx="12" cy="12" r="1" fill="#fff"/></svg>
    <span class="text-center" style="width:44px;font-size:13px">ع</span>
    <div class="clock text-center">9:42 PM<br>9/19/2025</div>
    <svg style="margin-right:11px" width="26" height="26" viewBox="0 0 26 26"><path fill="#fff" stroke="none" d="M1 3h16v12H8l-4 4v-4H1z"/><path stroke="#222" d="M4 6.500h10M4 9.500h10M4 12.500h6"/><circle cx="16" cy="17.500" r="8" fill="#2b2e2a" stroke="#aaa"/><text x="16" y="22" text-anchor="middle" font-size="12" fill="#fff" stroke="none">2</text></svg>
    <span style="width:1px;height:40px;background:#555"></span>
  </div>
</section>

<div class="activate"><div class="big-line">Activate Windows</div><div class="low-line">Go to Settings to activate Windows.</div></div>
<svg class="seal" height="92" viewBox="0 0 180 92" fill="#b0b0b0">
  <text x="87" y="50" text-anchor="middle" font-family="DejaVu Sans" font-weight="700" font-size="48">مستقل</text>
  <text x="87" y="80" text-anchor="middle" font-family="Open Sans" font-weight="700" font-size="26">mostaql.com</text>
</svg>
</div>
<script src="https://cdn.jsdelivr.net/npm/bootstrap@5.3.0/dist/js/bootstrap.bundle.min.js"></script>
</body>
</html>
